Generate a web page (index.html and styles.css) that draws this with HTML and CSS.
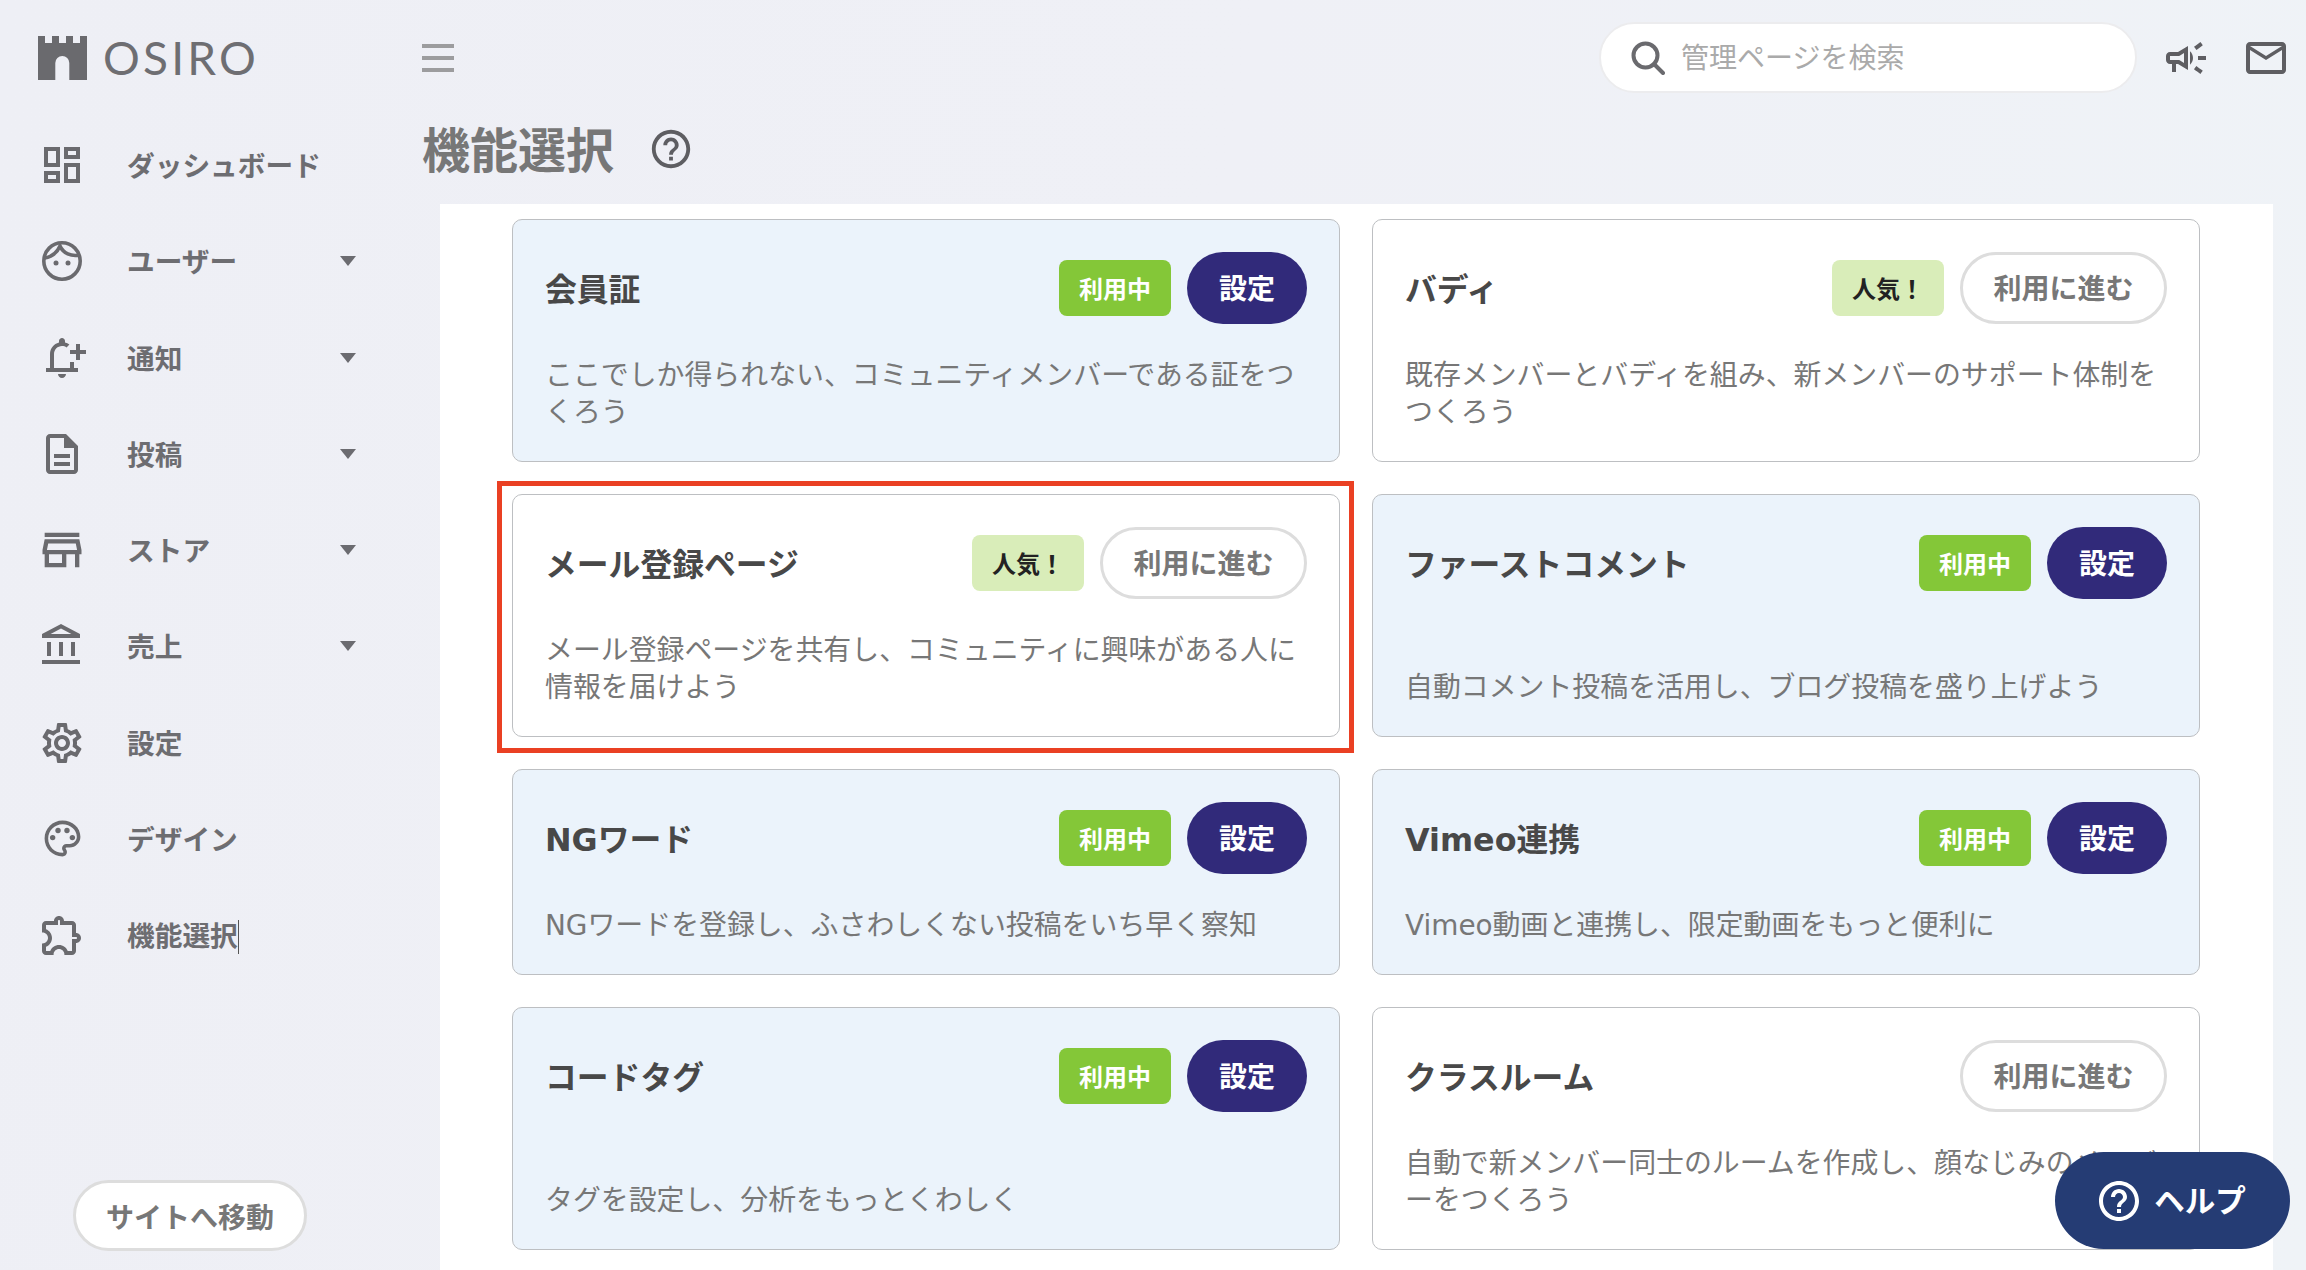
FILE: index.html
```html
<!DOCTYPE html>
<html lang="ja">
<head>
<meta charset="utf-8">
<title>OSIRO 機能選択</title>
<link rel="stylesheet" href="styles.css">
</head>
<body>
<aside class="sidebar">
  <div class="logo">
    <svg class="castle" viewBox="0 0 49 44"><path d="M0 0h7v7h7V0h7v7h7V0h7v7h7V0h7v44H31.300V27a7 7 0 0 0-14 0v17H0z"/></svg>
    <span class="logo-text">OSIRO</span>
  </div>
  <nav class="nav">
    <a class="nav-item"><span class="ico"><svg class="i48" viewBox="0 0 24 24"><path d="M19 5v2h-4V5h4M9 5v6H5V5h4m10 8v6h-4v-6h4M9 17v2H5v-2h4M21 3h-8v6h8V3zM11 3H3v10h8V3zm10 8h-8v10h8V11zm-10 4H3v6h8v-6z"/></svg></span><span class="nav-label">ダッシュボード</span></a>
    <a class="nav-item"><span class="ico"><svg class="face" viewBox="0 0 40 40"><circle class="stroke" cx="20" cy="20" r="18.2"/><path class="stroke" d="M2.500 17C9 16 15 12 18 5c3 7 11 11 20 9"/><circle cx="14" cy="22" r="2.500"/><circle cx="26" cy="22" r="2.500"/></svg></span><span class="nav-label">ユーザー</span><i class="caret"></i></a>
    <a class="nav-item"><span class="ico"><svg class="i48" viewBox="0 0 24 24"><path d="M16 14v3H8v-7c0-2.210 1.790-4 4-4 .85 0 1.640.26 2.280.72l1.430-1.430c-.64-.51-1.390-.88-2.210-1.090V3.500C13.500 2.670 12.830 2 12 2s-1.500.67-1.500 1.500v.7C7.910 4.860 6 7.210 6 10v7H4v2h16v-2h-2v-3h-2zM12 22c1.100 0 2-.9 2-2h-4c0 1.100.9 2 2 2zM24 8h-3V5h-2v3h-3v2h3v3h2v-3h3V8z"/></svg></span><span class="nav-label">通知</span><i class="caret"></i></a>
    <a class="nav-item"><span class="ico"><svg class="i48" viewBox="0 0 24 24"><path d="M8 16h8v2H8zm0-4h8v2H8zm6-10H6c-1.100 0-2 .9-2 2v16c0 1.100.89 2 1.990 2H18c1.100 0 2-.9 2-2V8l-6-6zm4 18H6V4h7v5h5v11z"/></svg></span><span class="nav-label">投稿</span><i class="caret"></i></a>
    <a class="nav-item"><span class="ico"><svg class="i52" viewBox="0 0 24 24"><path d="M18.360 9l.6 3H5.040l.6-3h12.720M20 4H4v2h16V4zm0 3H4l-1 5v2h1v6h10v-6h4v6h2v-6h1v-2l-1-5zM6 18v-4h6v4H6z"/></svg></span><span class="nav-label">ストア</span><i class="caret"></i></a>
    <a class="nav-item"><span class="ico"><svg class="i48" viewBox="0 0 24 24"><path d="M6.500 10h-2v7h2v-7zm6 0h-2v7h2v-7zm8.500 9H2v2h19v-2zm-2.500-9h-2v7h2v-7zm-7-6.740L16.710 6H6.290l5.210-2.740m0-2.260L2 6v2h19V6l-9.500-5z"/></svg></span><span class="nav-label">売上</span><i class="caret"></i></a>
    <a class="nav-item"><span class="ico"><svg class="i48" viewBox="0 0 24 24"><path d="M19.430 12.980c.04-.32.07-.64.07-.98 0-.34-.03-.66-.07-.98l2.110-1.650c.19-.15.24-.42.12-.64l-2-3.460c-.09-.16-.26-.25-.44-.25-.06 0-.12.01-.17.03l-2.490 1c-.52-.4-1.080-.73-1.690-.98l-.38-2.650C14.460 2.180 14.250 2 14 2h-4c-.25 0-.46.18-.49.42l-.38 2.650c-.61.25-1.170.59-1.690.98l-2.490-1c-.06-.02-.12-.03-.18-.03-.17 0-.34.09-.43.25l-2 3.460c-.13.22-.07.49.12.64l2.110 1.650c-.04.32-.07.65-.07.98 0 .33.03.66.07.98l-2.110 1.650c-.19.15-.24.42-.12.64l2 3.460c.09.16.26.25.44.25.06 0 .12-.01.17-.03l2.490-1c.52.4 1.080.73 1.690.98l.38 2.650c.03.24.24.42.49.42h4c.25 0 .46-.18.49-.42l.38-2.650c.61-.25 1.170-.59 1.690-.98l2.490 1c.06.02.12.03.18.03.17 0 .34-.09.43-.25l2-3.460c.12-.22.07-.49-.12-.64l-2.110-1.650zm-1.980-1.710c.04.31.05.52.05.73 0 .21-.02.43-.05.73l-.14 1.130.89.7 1.080.84-.7 1.210-1.270-.51-1.040-.42-.9.68c-.43.32-.84.56-1.250.73l-1.060.43-.16 1.130-.2 1.350h-1.400l-.19-1.350-.16-1.130-1.060-.43c-.43-.18-.83-.41-1.230-.71l-.91-.7-1.060.43-1.270.51-.7-1.210 1.080-.84.89-.7-.14-1.130c-.03-.31-.05-.54-.05-.74s.02-.43.05-.73l.14-1.130-.89-.7-1.080-.84.7-1.210 1.270.51 1.040.42.9-.68c.43-.32.84-.56 1.250-.73l1.060-.43.16-1.130.2-1.350h1.390l.19 1.350.16 1.130 1.060.43c.43.18.83.41 1.230.71l.91.7 1.060-.43 1.270-.51.7 1.210-1.070.85-.89.7.14 1.130zM12 8c-2.210 0-4 1.790-4 4s1.790 4 4 4 4-1.790 4-4-1.790-4-4-4zm0 6c-1.100 0-2-.9-2-2s.9-2 2-2 2 .9 2 2-.9 2-2 2z"/></svg></span><span class="nav-label">設定</span></a>
    <a class="nav-item"><span class="ico"><svg class="i44" viewBox="0 0 24 24"><path d="M12 22C6.490 22 2 17.510 2 12S6.490 2 12 2s10 4.040 10 9c0 3.310-2.690 6-6 6h-1.770c-.28 0-.5.22-.5.5 0 .12.05.23.13.33.41.47.64 1.060.64 1.670 0 1.380-1.120 2.500-2.500 2.500zm0-18c-4.410 0-8 3.590-8 8s3.590 8 8 8c.28 0 .5-.22.5-.5 0-.16-.08-.28-.14-.35-.41-.46-.63-1.050-.63-1.650 0-1.380 1.120-2.500 2.500-2.500H16c2.210 0 4-1.790 4-4 0-3.860-3.590-7-8-7z"/><circle cx="6.500" cy="11.500" r="1.500"/><circle cx="9.500" cy="7.500" r="1.500"/><circle cx="14.500" cy="7.500" r="1.500"/><circle cx="17.500" cy="11.500" r="1.500"/></svg></span><span class="nav-label">デザイン</span></a>
    <a class="nav-item"><span class="ico"><svg class="i48" viewBox="0 0 24 24"><path d="M10.500 4.500c.28 0 .5.22.5.5v2h6v6h2c.28 0 .5.22.5.5s-.22.5-.5.5h-2v6h-2.120c-.68-1.750-2.390-3-4.380-3s-3.700 1.250-4.380 3H4v-2.120c1.750-.68 3-2.390 3-4.380 0-1.990-1.240-3.700-2.990-4.380L4 7h6V5c0-.28.22-.5.5-.5m0-2C9.120 2.500 8 3.620 8 5H4c-1.100 0-1.990.9-1.990 2v3.800h.29c1.490 0 2.700 1.210 2.700 2.700s-1.210 2.700-2.700 2.700H2V20c0 1.100.9 2 2 2h3.800v-.3c0-1.490 1.210-2.700 2.700-2.700s2.700 1.210 2.700 2.700v.3H17c1.100 0 2-.9 2-2v-4c1.380 0 2.500-1.120 2.500-2.500S20.380 11 19 11V7c0-1.100-.9-2-2-2h-4c0-1.380-1.120-2.500-2.500-2.500z"/></svg></span><span class="nav-label caret-text">機能選択</span></a>
  </nav>
  <a class="site-link">サイトへ移動</a>
</aside>

<main class="main">
  <header class="topbar">
    <svg class="burger" viewBox="0 0 32 28"><path d="M0 0h32v4H0zM0 12h32v4H0zM0 24h32v4H0z"/></svg>
    <div class="search">
      <svg class="search-icon" viewBox="0 0 34 34"><circle cx="14.500" cy="14.500" r="12"/><path d="M23 23l9 9"/></svg>
      <span class="placeholder">管理ページを検索</span>
    </div>
    <svg class="i48 dark" viewBox="0 0 24 24"><path d="M18 11v2h4v-2h-4zm-2 6.610c.96.71 2.210 1.650 3.200 2.390.4-.53.8-1.070 1.200-1.600-.99-.74-2.240-1.680-3.200-2.400-.4.54-.8 1.080-1.200 1.610zM20.400 5.600c-.4-.53-.8-1.070-1.200-1.600-.99.74-2.240 1.680-3.200 2.400.4.53.8 1.070 1.200 1.600.96-.72 2.210-1.650 3.200-2.400zM4 9c-1.100 0-2 .9-2 2v2c0 1.100.9 2 2 2h1v4h2v-4h1l5 3V6L8 9H4zm5.030 1.710L11 9.530v4.940l-1.970-1.180-.48-.29H4v-2h4.550l.48-.29zM15.500 12c0-1.330-.58-2.530-1.500-3.350v6.690c.92-.81 1.500-2.010 1.500-3.340z"/></svg>
    <svg class="i48 dark" viewBox="0 0 24 24"><path d="M20 4H4c-1.100 0-1.990.9-1.990 2L2 18c0 1.100.9 2 2 2h16c1.100 0 2-.9 2-2V6c0-1.100-.9-2-2-2zm0 14H4V8l8 5 8-5v10zm-8-7L4 6h16l-8 5z"/></svg>
  </header>

  <div class="page-head">
    <h1 class="page-title">機能選択</h1>
    <svg class="i46 dark" viewBox="0 0 24 24"><path d="M11 18h2v-2h-2v2zm1-16C6.480 2 2 6.480 2 12s4.480 10 10 10 10-4.480 10-10S17.520 2 12 2zm0 18c-4.410 0-8-3.590-8-8s3.590-8 8-8 8 3.590 8 8-3.590 8-8 8zm0-14c-2.210 0-4 1.790-4 4h2c0-1.100.9-2 2-2s2 .9 2 2c0 2-3 1.750-3 5h2c0-2.250 3-2.500 3-5 0-2.210-1.790-4-4-4z"/></svg>
  </div>

  <section class="panel">
    <div class="grid">
      <article class="card active">
        <div class="card-head"><h2 class="card-title">会員証</h2><span class="badge used">利用中</span><a class="btn primary">設定</a></div>
        <p class="card-desc">ここでしか得られない、コミュニティメンバーである証をつくろう</p>
      </article>
      <article class="card">
        <div class="card-head"><h2 class="card-title">バディ</h2><span class="badge popular">人気！</span><a class="btn outline">利用に進む</a></div>
        <p class="card-desc">既存メンバーとバディを組み、新メンバーのサポート体制をつくろう</p>
      </article>
      <article class="card marked">
        <div class="card-head"><h2 class="card-title">メール登録ページ</h2><span class="badge popular">人気！</span><a class="btn outline">利用に進む</a></div>
        <p class="card-desc">メール登録ページを共有し、コミュニティに興味がある人に情報を届けよう</p>
      </article>
      <article class="card active">
        <div class="card-head"><h2 class="card-title">ファーストコメント</h2><span class="badge used">利用中</span><a class="btn primary">設定</a></div>
        <p class="card-desc">自動コメント投稿を活用し、ブログ投稿を盛り上げよう</p>
      </article>
      <article class="card active">
        <div class="card-head"><h2 class="card-title">NGワード</h2><span class="badge used">利用中</span><a class="btn primary">設定</a></div>
        <p class="card-desc">NGワードを登録し、ふさわしくない投稿をいち早く察知</p>
      </article>
      <article class="card active">
        <div class="card-head"><h2 class="card-title">Vimeo連携</h2><span class="badge used">利用中</span><a class="btn primary">設定</a></div>
        <p class="card-desc">Vimeo動画と連携し、限定動画をもっと便利に</p>
      </article>
      <article class="card active">
        <div class="card-head"><h2 class="card-title">コードタグ</h2><span class="badge used">利用中</span><a class="btn primary">設定</a></div>
        <p class="card-desc">タグを設定し、分析をもっとくわしく</p>
      </article>
      <article class="card">
        <div class="card-head"><h2 class="card-title">クラスルーム</h2><a class="btn outline">利用に進む</a></div>
        <p class="card-desc">自動で新メンバー同士のルームを作成し、顔なじみのメンバーをつくろう</p>
      </article>
    </div>
  </section>
</main>

<a class="help">
  <svg class="i48 white" viewBox="0 0 24 24"><path d="M11 18h2v-2h-2v2zm1-16C6.480 2 2 6.480 2 12s4.480 10 10 10 10-4.480 10-10S17.520 2 12 2zm0 18c-4.410 0-8-3.590-8-8s3.590-8 8-8 8 3.590 8 8-3.590 8-8 8zm0-14c-2.210 0-4 1.790-4 4h2c0-1.100.9-2 2-2s2 .9 2 2c0 2-3 1.750-3 5h2c0-2.250 3-2.500 3-5 0-2.210-1.790-4-4-4z"/></svg>
  <span class="help-label">ヘルプ</span>
</a>
</body>
</html>
```
FILE: styles.css
```css
* { box-sizing: border-box; }
html, body { margin: 0; height: 100%; }
body {
  display: flex;
  height: 100vh;
  overflow: hidden;
  background: linear-gradient(100deg, #eeeff5 0%, #eff0f6 50%, #eff3f7 100%);
  font-family: "DejaVu Sans", "Noto Sans CJK JP", sans-serif;
  color: #6b6b6f;
}
svg { display: block; flex: none; fill: #6a6a6e; }

/* sidebar */
.sidebar { width: 422px; flex: none; display: flex; flex-direction: column; padding-bottom: 19px; }
.logo { display: flex; align-items: flex-start; gap: 16px; height: 117px; padding: 36px 0 0 38px; }
.castle { width: 49px; height: 44px; }
.logo-text { font-family: Lato, sans-serif; font-weight: 400; font-size: 46px; line-height: 44px; letter-spacing: 3.2px; color: #6e6e72; }
.nav { display: grid; grid-auto-rows: 96.25px; }
.nav-item { display: flex; align-items: center; padding: 0 66px 0 38px; font-size: 27.7px; font-weight: 700; line-height: 40px; color: #6d6d71; }
.nav-label { display: block; margin-top: 4px; }
.ico { width: 48px; height: 48px; margin-right: 41px; display: flex; align-items: center; justify-content: center; flex: none; }
.i48 { width: 48px; height: 48px; }
.i52 { width: 52px; height: 52px; }
.i44 { width: 43px; height: 43px; }
.i46 { width: 46px; height: 46px; }
.face { width: 40px; height: 40px; }
.face .stroke { fill: none; stroke: #6a6a6e; stroke-width: 3.6; }
.caret { margin-left: auto; width: 0; height: 0; border-left: 8px solid transparent; border-right: 8px solid transparent; border-top: 10px solid #6b6b70; }
.caret-text { border-right: 1px solid #555; line-height: 34px; }
.site-link { margin: auto 0 0 73px; width: 234px; height: 71px; display: flex; align-items: center; justify-content: center; background: #fff; border: 3px solid #ddd; border-radius: 36px; font-size: 28px; font-weight: 700; color: #777; }

/* main */
.main { flex: 1; min-width: 0; display: flex; flex-direction: column; padding-right: 16px; }
.topbar { display: flex; align-items: center; gap: 32px; margin-top: 22px; height: 71px; flex: none; }
.burger { width: 32px; height: 28px; fill: #9c9c9e; margin-right: auto; }
.search { width: 538px; height: 71px; flex: none; margin-right: -7px; display: flex; align-items: center; gap: 16px; padding-left: 30px; background: #fff; border: 2px solid #ececee; border-radius: 36px; }
.search-icon { width: 34px; height: 34px; fill: none; stroke: #6a6a6e; stroke-width: 4; stroke-linecap: round; }
.placeholder { font-size: 28px; line-height: 40px; color: #aaa; margin-top: 3px; }
.dark { fill: #5e5e62; }
.white { fill: #fff; }
.page-head { display: flex; align-items: center; gap: 34px; margin-top: 32px; height: 48px; flex: none; }
.page-title { margin: 4px 0 0; font-size: 48px; line-height: 48px; font-weight: 700; color: #777; }
.panel { flex: 1; min-height: 0; margin: 31px 17px 0 18px; padding: 15px 73px 0 72px; background: #fff; overflow: hidden; }
.grid { display: grid; grid-template-columns: 1fr 1fr; gap: 32px; }

/* cards */
.card { position: relative; display: flex; flex-direction: column; padding: 32px 32px 30px; background: #fff; border: 1px solid #bdbfc2; border-radius: 10px; }
.card.active { background: #ebf3fb; }
.card.marked::after { content: ""; position: absolute; top: -14px; right: -15px; bottom: -17px; left: -16px; border: 5px solid #ea4023; pointer-events: none; }
.card-head { display: flex; align-items: center; gap: 16px; height: 72px; margin-bottom: 33px; }
.card-title { margin: 4px auto 0 0; font-size: 31.8px; line-height: 44px; font-weight: 700; color: #484848; }
.card-desc { margin: auto 0 0; font-size: 27.9px; line-height: 37px; color: #777; }
.badge { width: 112px; height: 56px; padding-bottom: 2px; display: flex; align-items: center; justify-content: center; border-radius: 8px; font-size: 24px; font-weight: 700; }
.badge.used { background: #84c738; color: #fff; }
.badge.popular { background: #d9edb9; color: #222; }
.btn { height: 72px; padding-bottom: 2px; display: flex; align-items: center; justify-content: center; border-radius: 36px; font-size: 28px; font-weight: 700; }
.btn.primary { width: 120px; background: #312a7a; color: #fff; }
.btn.outline { width: 207px; background: #fff; border: 3px solid #ddd; color: #777; }

/* help */
.help { position: fixed; left: 2055px; top: 1152px; width: 235px; height: 97px; padding-right: 4px; display: flex; align-items: center; justify-content: center; gap: 11px; background: #253c74; border-radius: 49px; color: #fff; font-size: 30.500px; font-weight: 700; }
.help-label { margin-top: -4px; }
```
